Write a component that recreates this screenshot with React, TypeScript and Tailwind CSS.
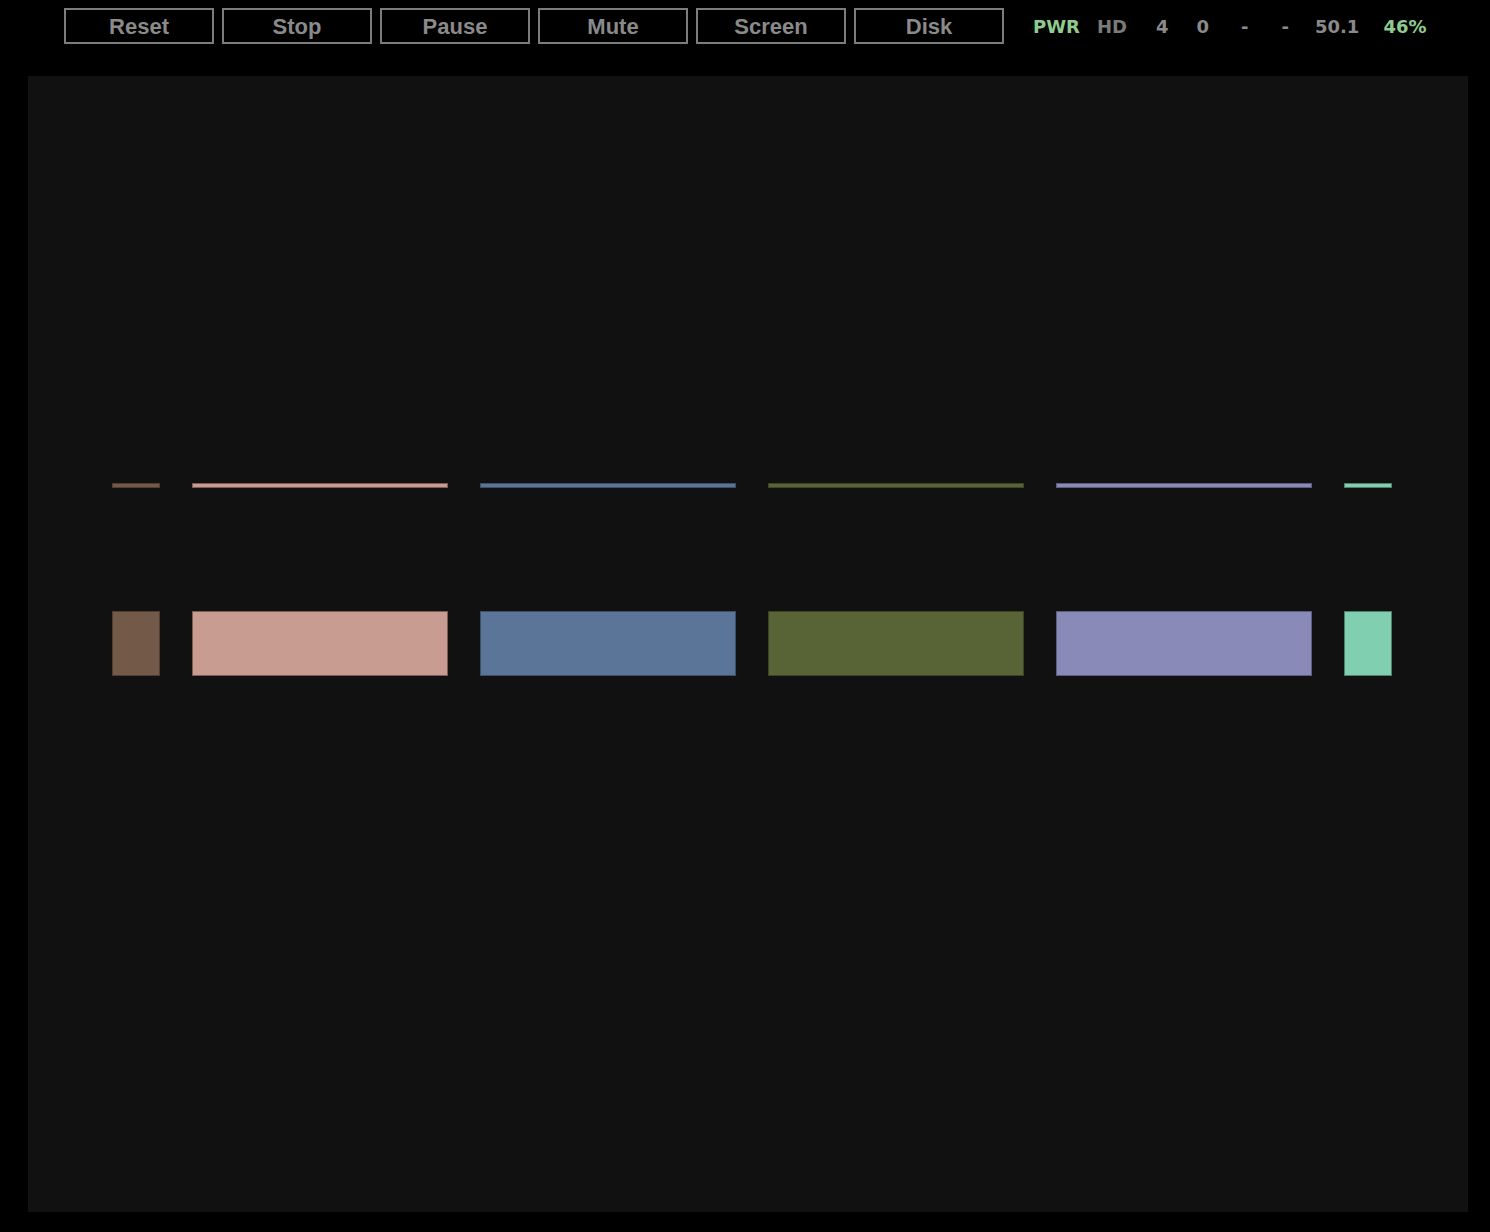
import React from 'react';

const buttons = ['Reset', 'Stop', 'Pause', 'Mute', 'Screen', 'Disk'];

const tracks = [
  { w: 'w-[48px]', bg: 'bg-[#735a48]', border: 'border-[#4e3e33]' },
  { w: 'w-[256px]', bg: 'bg-[#c89c90]', border: 'border-[#7a5d56]' },
  { w: 'w-[256px]', bg: 'bg-[#5b7599]', border: 'border-[#3d4e66]' },
  { w: 'w-[256px]', bg: 'bg-[#586436]', border: 'border-[#3c4427]' },
  { w: 'w-[256px]', bg: 'bg-[#8a8ab9]', border: 'border-[#5c5c7c]' },
  { w: 'w-[48px]', bg: 'bg-[#80cfb0]', border: 'border-[#4f7e6c]' },
];

export default function App() {
  return (
    <div className="min-h-[1232px] bg-black" style={{ fontFamily: 'Liberation Sans, Arial, sans-serif' }}>
      {/* toolbar */}
      <div className="flex items-center h-[52px] pt-[8px] pb-[8px] pl-[64px]">
        <div className="flex gap-[8px]">
          {buttons.map((b) => (
            <button
              key={b}
              className="w-[150px] h-[36px] border-2 border-[#7c7c7c] text-[#8a8a8a] font-bold text-[22px] leading-none pt-[2px]"
            >
              {b}
            </button>
          ))}
        </div>

        {/* status */}
        <div
          className="flex items-center font-bold text-[18px] text-[#8a8a8a] ml-[29px] pt-[1px]"
          style={{ fontFamily: 'DejaVu Sans, Verdana, sans-serif' }}
        >
          <span className="text-[#8fcb8f]">PWR</span>
          <span className="ml-[17px] text-[#7a7a7a]">HD</span>
          <span className="ml-[29px]">4</span>
          <span className="ml-[28px]">0</span>
          <span className="ml-[32px]">-</span>
          <span className="ml-[33px]">-</span>
          <span className="ml-[26px]">50.1</span>
          <span className="ml-[24px] text-[#8fcb8f]">46%</span>
        </div>
      </div>

      {/* screen */}
      <div className="ml-[28px] mt-[24px] w-[1440px] h-[1136px] bg-[#111111] pl-[84px] pt-[407px]">
        <div className="flex gap-[32px]">
          {tracks.map((t, i) => (
            <div key={i} className={`${t.w} h-[5px] border ${t.bg} ${t.border}`} />
          ))}
        </div>
        <div className="flex gap-[32px] mt-[123px]">
          {tracks.map((t, i) => (
            <div key={i} className={`${t.w} h-[65px] border ${t.bg} ${t.border}`} />
          ))}
        </div>
      </div>
    </div>
  );
}
